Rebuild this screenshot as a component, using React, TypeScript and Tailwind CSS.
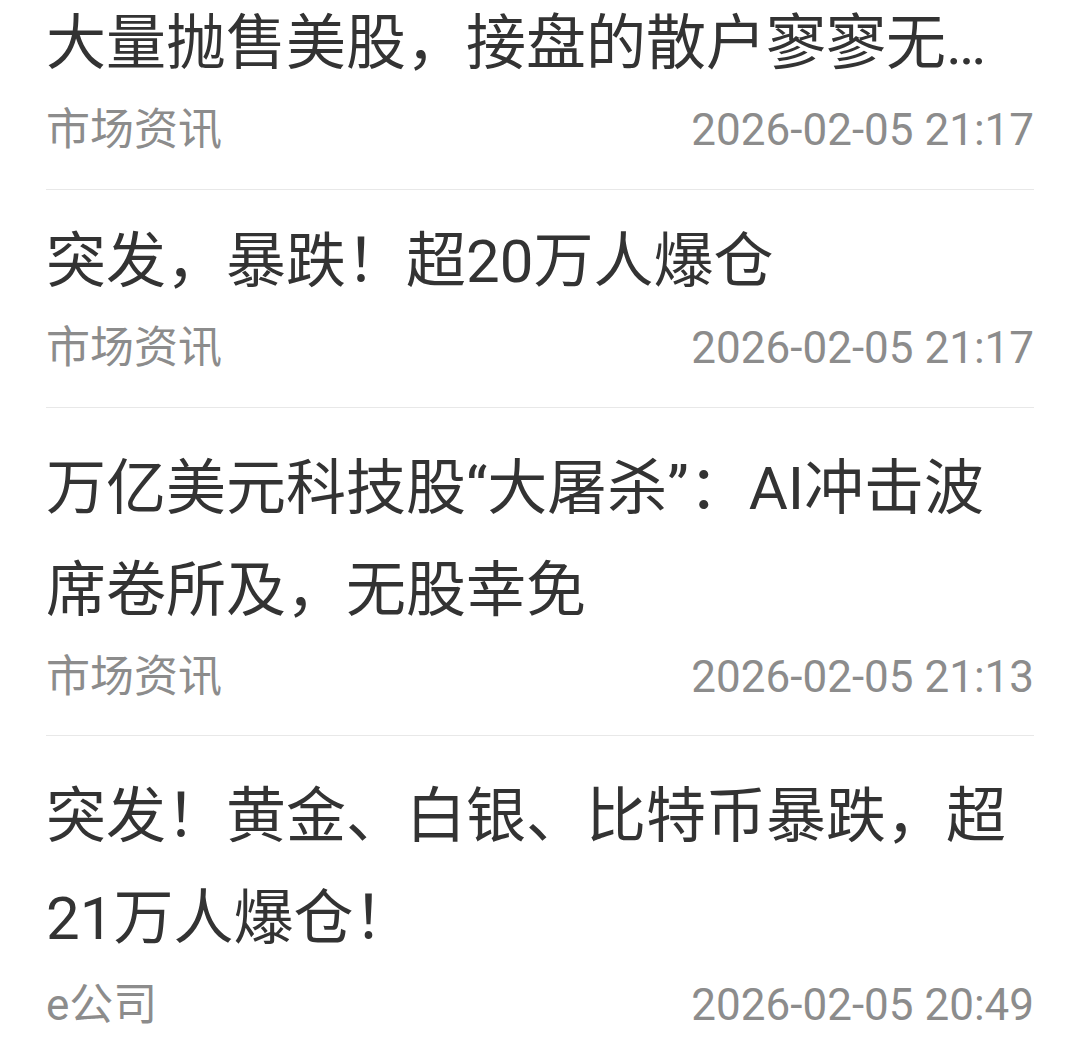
import React from "react";

type Item = { title: string; source: string; time: string; multi: boolean };

const items: Item[] = [
  { title: "大量抛售美股，接盘的散户寥寥无…", source: "市场资讯", time: "2026-02-05 21:17", multi: false },
  { title: "突发，暴跌！超20万人爆仓", source: "市场资讯", time: "2026-02-05 21:17", multi: false },
  { title: "万亿美元科技股“大屠杀”：AI冲击波席卷所及，无股幸免", source: "市场资讯", time: "2026-02-05 21:13", multi: true },
  { title: "突发！黄金、白银、比特币暴跌，超21万人爆仓！", source: "e公司", time: "2026-02-05 20:49", multi: true },
];

export default function App() {
  return (
    <div
      className="w-[1080px] h-[1058px] overflow-hidden bg-white"
      style={{ fontFamily: 'Roboto, "Noto Sans CJK SC", sans-serif' }}
    >
      <div className="px-[46px] -mt-[28px]">
        {items.map((it, i) => (
          <div
            key={i}
            className={`border-b border-[#e8e8e8] ${it.multi ? "pt-[30px] pb-[23px]" : "pt-[21px] pb-[24px]"}`}
          >
            <div className="text-[60px] leading-[102px] text-[#333333] line-clamp-2 break-all">
              {it.title}
            </div>
            <div className="flex items-center justify-between h-[70px] text-[44px] leading-[70px] text-[#8c8c8c]">
              <span>{it.source}</span>
              <span>{it.time}</span>
            </div>
          </div>
        ))}
      </div>
    </div>
  );
}
